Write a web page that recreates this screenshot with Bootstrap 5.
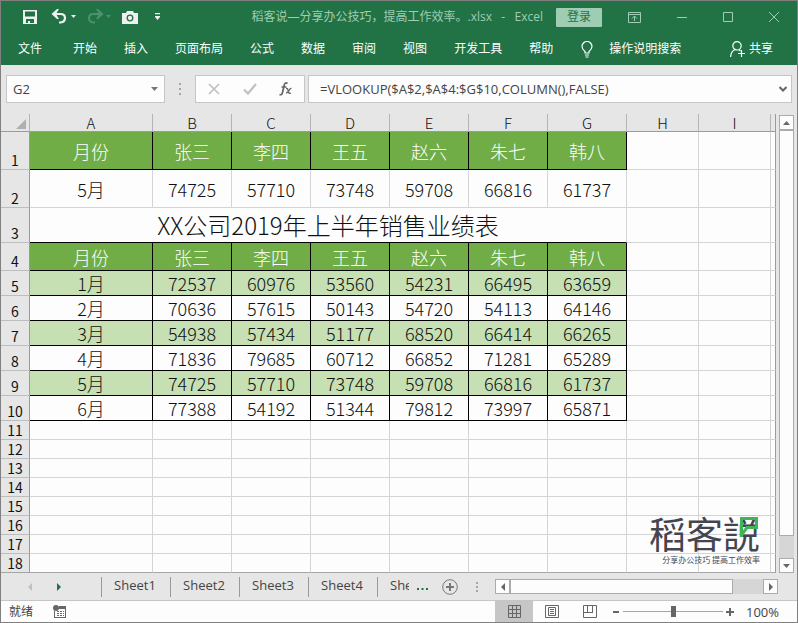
<!DOCTYPE html>
<html lang="zh-CN">
<head>
<meta charset="utf-8">
<meta name="viewport" content="width=device-width, initial-scale=1">
<title>稻客说—分享办公技巧，提高工作效率。.xlsx - Excel</title>
<link href="https://cdn.jsdelivr.net/npm/bootstrap@5.3.0/dist/css/bootstrap.min.css" rel="stylesheet">
<style>
:root{--green:#217346;--mint:#9fcdb3;--chrome:#e6e6e6;--line:#d4d4d4;--edge:#9b9b9b}
body{font-family:"Open Sans","Noto Sans CJK SC",sans-serif;font-size:12px;line-height:16px;color:#444;background:#fdfdfd}
button,input{font:inherit;color:inherit}
button{background:none;border:0;padding:0;line-height:0}
svg{display:block;flex:none}
.app-window{border:1px solid #808080;min-height:100vh}
.ribbon{background:var(--green);color:#fff}
.title-row{height:32px;padding:0 18px 0 22px;color:var(--mint)}
.quick{gap:5px;color:#f0f0f0}
.quick .dim{color:#4f9070}
.camera{margin-left:6px}
.doc-title{white-space:pre}
.login{background:var(--mint);color:var(--green);width:46px;height:19px;border-radius:1px;line-height:18px;margin:0 26px 0 13px}
.win-ctl{gap:36px}
.tab-row{height:32px;padding:0 24px 0 17px}
.ribbon-tabs{gap:27px}
.ribbon-tabs a,.tab-row button{color:#fff;text-decoration:none;line-height:16px}
.ribbon-tabs li:first-child{margin-right:4px}
.formula-row{background:var(--chrome);padding:10px 5px 11px}
.field-box{background:#fdfdfd;border:1px solid #c6c6c6;height:28px}
.field-box input{border:0;outline:0;background:none;min-width:0;padding:0;font-size:13px;line-height:18px}
.name-box{width:159px;padding:0 6px}
.fx-box{width:110px;padding:0 11px 0 12px}
.formula-box{margin-left:3px;padding:0 4px 0 11px}
.grip{width:30px}
.sheet-area{background:var(--chrome)}
.sheet-grid{table-layout:fixed;width:100%;border-collapse:separate;border-spacing:0;font-family:"Noto Sans CJK SC",sans-serif;color:#111;background:#fdfdfd}
.sheet-grid th,.sheet-grid td{padding:0;border:0 solid var(--line);border-width:0 1px 1px 0;text-align:center;vertical-align:middle;font-weight:300;font-size:18px;line-height:18px;white-space:nowrap}
.sheet-grid thead th{height:18px;line-height:17px;font-size:15px;background:var(--chrome);border-right-color:#b4b4b4;border-bottom-color:var(--edge)}
.sheet-grid tbody th{background:var(--chrome);vertical-align:bottom;font-size:14px;line-height:17px;border-right-color:var(--edge);border-bottom-color:#bdbdbd;font-weight:400}
.sheet-grid tr>:last-child{border-right-color:var(--edge)}
.sheet-grid tbody tr:last-child>*{border-bottom-color:#a6a6a6}
.c-num{width:29px}.c-month{width:123px}.c-name{width:79px}.c-free{width:72px}
.r-tall{height:38px}.r-title{height:35px}.r-head{height:28px}.r-data{height:25px}.r-free{height:19px}
.sheet-grid .boxed{border-color:#000}
.sheet-grid .hd{background:#70ad47;color:#fff}
.sheet-grid .band{background:#c6e0b4}
.sheet-grid .big-title{font-size:24px;line-height:24px;border-bottom-color:#000}
.corner{width:0;border:solid transparent;border-width:0 0 10px 10px;border-bottom-color:#b0b0b0;margin:2px 3px 0 auto}
.wordmark{right:16px;bottom:9px;color:#45454f;pointer-events:none}
.wordmark-name{font:400 37px/44px "Noto Sans CJK SC",sans-serif}
.wordmark-sub{font:400 8px/9px "Noto Sans CJK SC",sans-serif;text-align:right}
.wordmark svg{right:2px;top:6px}
.v-scroll{width:21px;padding:1px 3px 0}
.scroll-btn,.scroll-thumb{background:#fdfdfd;border:1px solid #ababab}
.scroll-btn{width:15px;height:15px;flex:none;display:flex;align-items:center;justify-content:center;color:#666}
.v-scroll .scroll-track{background:#d6d6d6;padding-bottom:22px;width:15px}
.sheets-row{background:var(--chrome);height:28px;border-bottom:1px solid #c6c6c6;font-size:13px}
.sheet-nav{width:100px;padding-left:27px;gap:25px}
.sheet-tab{width:69px;height:20px;line-height:16px;padding-right:2px;padding-bottom:4px;border-left:1px solid #999}
.sheet-tab.cut{width:32px;padding:0 0 4px 12px;overflow:hidden}
.new-sheet{margin-left:14px}
.h-scroll{width:283px;margin-right:19px}
.h-scroll .scroll-track{background:#d6d6d6;padding-right:30px}
.h-scroll .scroll-thumb{height:15px}
.status-row{height:21px;padding:0 18px 0 8px}
.view-btn{width:38px;height:21px;display:flex;align-items:center;justify-content:center;color:#666}
.view-btn.on{background:#c6c6c6}
.zoom-range{appearance:none;width:100px;height:15px;margin:0 3px 0 4px;background:linear-gradient(#a6a6a6,#a6a6a6) center/100% 1px no-repeat}
.zoom-range::-webkit-slider-thumb{appearance:none;width:5px;height:11px;background:#666}
.zoom-text{font-size:13px;width:33px;margin-left:12px}
</style>
<script src="https://cdn.jsdelivr.net/npm/bootstrap@5.3.0/dist/js/bootstrap.bundle.min.js"></script>
</head>
<body>
<div class="app-window d-flex flex-column">
  <header class="ribbon">
    <div class="title-row d-flex align-items-center">
      <div class="quick d-flex align-items-center">
        <button aria-label="保存"><svg width="14" height="14" fill="currentColor"><path fill-rule="evenodd" d="M0 0h14v14H0zM2 1.500v5h10v-5zM3 9v4h2v-2h2v2h4V9z"/></svg></button>
        <button aria-label="撤消"><svg width="34" height="16"><path d="M11 5h7.500q4.500 0 4.500 4t-4.500 4.500H17" fill="none" stroke="currentColor" stroke-width="2.200"/><path d="M9.500 5l5.500-5h2l-3 5 3 5h-2z" fill="currentColor"/><path d="M29 6h5l-2.500 3z" fill="currentColor"/></svg></button>
        <button class="dim" aria-label="恢复"><svg width="30" height="16"><path d="M20 5h-7.500Q8 5 8 9t4.500 4.500H14" fill="none" stroke="currentColor" stroke-width="2"/><path d="M22.500 5L17 0h-2l3 5-3 5h2z" fill="currentColor"/><path d="M25 6h5l-2.500 3z" fill="currentColor"/></svg></button>
        <button class="camera" aria-label="照相机"><svg width="16" height="13" fill="none"><path d="M0 2h4l1-2h6l1 2h4v11H0z" fill="currentColor"/><circle cx="8" cy="7" r="2.800" stroke="#217346" stroke-width="1.300"/></svg></button>
        <button class="ms-2" aria-label="自定义快速访问工具栏"><svg width="12" height="8"><path d="M4 0h5v1.300H4zM4 3h5v1L6.500 7 4 4z" fill="currentColor"/></svg></button>
      </div>
      <div class="doc-title ms-auto">稻客说—分享办公技巧，提高工作效率。.xlsx   -   Excel</div>
      <button class="login">登录</button>
      <div class="win-ctl d-flex align-items-center">
        <button aria-label="功能区显示选项"><svg width="13" height="11" fill="none" stroke="currentColor"><path d="M.5.5h12v10H.5zM.5 2.500h12M6.500 9V4M4 6.500L6.500 4 9 6.500"/></svg></button>
        <button aria-label="最小化"><svg width="10" height="11" stroke="currentColor"><path d="M0 5.500h10"/></svg></button>
        <button aria-label="最大化"><svg width="10" height="10" fill="none" stroke="currentColor"><path d="M.5.5h9v9h-9z"/></svg></button>
        <button aria-label="关闭"><svg width="10" height="10" stroke="currentColor"><path d="M0 0l10 10M10 0L0 10"/></svg></button>
      </div>
    </div>
    <nav class="tab-row d-flex align-items-center">
      <ul class="ribbon-tabs list-unstyled d-flex m-0">
        <li><a href="#">文件</a></li><li><a href="#">开始</a></li><li><a href="#">插入</a></li><li><a href="#">页面布局</a></li><li><a href="#">公式</a></li><li><a href="#">数据</a></li><li><a href="#">审阅</a></li><li><a href="#">视图</a></li><li><a href="#">开发工具</a></li><li><a href="#">帮助</a></li>
      </ul>
      <button class="d-flex align-items-center ms-4"><svg class="ms-1 me-3" width="12" height="17" fill="none" stroke="currentColor"><path d="M4 12v-1.500Q1 8 1 5.500a5 5 0 0 1 10 0Q11 8 8 10.500V12zM4 14h4M4.500 16h3" stroke-width="1.200"/></svg>操作说明搜索</button>
      <button class="d-flex align-items-center ms-auto"><svg class="me-1" width="15" height="16" fill="none" stroke="currentColor" stroke-width="1.200"><circle cx="7" cy="4.800" r="4.200"/><path d="M.6 16q.4-6 4.400-7.200M9 9l1.500 1M11.500 9v7M8 12.500h7"/></svg>共享</button>
    </nav>
  </header>

  <div class="formula-row d-flex align-items-center">
    <div class="name-box field-box d-flex align-items-center">
      <input class="flex-grow-1" aria-label="名称框" value="G2">
      <button aria-label="展开名称框"><svg width="7" height="4"><path d="M0 0h7L3.500 4z" fill="#777"/></svg></button>
    </div>
    <div class="grip"><svg class="mx-auto" width="2" height="12" fill="#a6a6a6"><path d="M0 0h2v2H0zM0 5h2v2H0zM0 10h2v2H0z"/></svg></div>
    <div class="fx-box field-box d-flex align-items-center justify-content-between">
      <button aria-label="取消"><svg width="12" height="12" stroke="#c0c0c0" stroke-width="1.700"><path d="M1 1l10 10M11 1L1 11"/></svg></button>
      <button aria-label="输入"><svg width="14" height="12" fill="none" stroke="#c0c0c0" stroke-width="2.200"><path d="M1 6.500l4 4L13 1"/></svg></button>
      <button aria-label="插入函数"><svg width="14" height="14" fill="none" stroke="#666"><path d="M8.500 1.500Q6-.5 5 4L3.500 10.500Q2.800 13.500.5 12.500M2.500 5h5" stroke-width="1.700"/><path d="M7 6.500q1.500-.5 2 1.500l.8 2.500q.5 1.500 2 .5M12.500 6.500q-1-.5-2.500 2T7 11" stroke-width="1.400"/></svg></button>
    </div>
    <div class="formula-box field-box d-flex align-items-center flex-grow-1">
      <input class="flex-grow-1" aria-label="编辑栏" value="=VLOOKUP($A$2,$A$4:$G$10,COLUMN(),FALSE)">
      <button aria-label="展开编辑栏"><svg width="8" height="6" fill="none" stroke="#666" stroke-width="2"><path d="M.5 1L4 4.500 7.500 1"/></svg></button>
    </div>
  </div>

  <main class="sheet-area d-flex flex-grow-1">
    <div class="position-relative flex-grow-1">
      <table class="sheet-grid">
        <colgroup><col class="c-num"><col class="c-month"><col class="c-name" span="6"><col class="c-free" span="2"><col></colgroup>
        <thead><tr><th><div class="corner"></div></th><th>A</th><th>B</th><th>C</th><th>D</th><th>E</th><th>F</th><th>G</th><th>H</th><th>I</th><th></th></tr></thead>
        <tbody id="rows"></tbody>
      </table>
      <div class="wordmark position-absolute">
        <div class="wordmark-name">稻客説</div>
        <svg class="position-absolute" width="18" height="22" fill="none" stroke="#3fb558" stroke-width="3"><path d="M1.500 20V1.500h15v9H7L1.500 18"/></svg>
        <div class="wordmark-sub">分享办公技巧 提高工作效率</div>
      </div>
    </div>
    <div class="v-scroll d-flex flex-column">
      <button class="scroll-btn" aria-label="向上滚动"><svg width="7" height="4"><path d="M0 4h7L3.500 0z" fill="currentColor"/></svg></button>
      <div class="scroll-track flex-grow-1 d-flex"><div class="scroll-thumb flex-grow-1"></div></div>
      <button class="scroll-btn" aria-label="向下滚动"><svg width="7" height="4"><path d="M0 0h7L3.500 4z" fill="currentColor"/></svg></button>
    </div>
  </main>

  <div class="sheets-row d-flex align-items-center">
    <div class="sheet-nav d-flex">
      <button aria-label="上一张工作表"><svg width="4" height="8"><path d="M4 0v8L0 4z" fill="#c0c0c0"/></svg></button>
      <button aria-label="下一张工作表"><svg width="4" height="8"><path d="M0 0v8l4-4z" fill="#217346"/></svg></button>
    </div>
    <button class="sheet-tab">Sheet1</button><button class="sheet-tab">Sheet2</button><button class="sheet-tab">Sheet3</button><button class="sheet-tab">Sheet4</button><button class="sheet-tab cut text-start">She</button>
    <button class="ms-2" aria-label="更多工作表"><svg width="11" height="8" fill="#217346"><path d="M0 5h2v2H0zM4.500 5h2v2h-2zM9 5h2v2H9z"/></svg></button>
    <button class="new-sheet" aria-label="新工作表"><svg width="16" height="16" fill="none" stroke="#777"><circle cx="8" cy="8" r="7.300"/><path d="M4 8h8M8 4v8" stroke-width="2"/></svg></button>
    <svg class="mx-auto" width="2" height="10" fill="#a6a6a6"><path d="M0 0h2v2H0zM0 4h2v2H0zM0 8h2v2H0z"/></svg>
    <div class="h-scroll d-flex">
      <button class="scroll-btn" aria-label="向左滚动"><svg width="4" height="8"><path d="M4 0v8L0 4z" fill="currentColor"/></svg></button>
      <div class="scroll-track flex-grow-1"><div class="scroll-thumb"></div></div>
      <button class="scroll-btn" aria-label="向右滚动"><svg width="4" height="8"><path d="M0 0v8l4-4z" fill="currentColor"/></svg></button>
    </div>
  </div>

  <footer class="status-row d-flex align-items-center">
    <span>就绪</span>
    <button class="ms-3" aria-label="录制宏"><svg class="ms-1" width="13" height="13" fill="#666"><path fill-rule="evenodd" d="M6 1h7v12H1V6h1v6h10V4H6z"/><circle cx="3" cy="3" r="3"/><path d="M4 6h2v1H4zM7 6h2v1H7zM10 6h1v1h-1zM4 8h2v1H4zM7 8h2v1H7zM10 8h1v1h-1zM4 10h2v1H4zM7 10h2v1H7zM10 10h1v1h-1z"/></svg></button>
    <button class="view-btn on ms-auto" aria-label="普通"><svg width="13" height="13" fill="none" stroke="currentColor"><path d="M.5.5h12v12H.5zM4.500 0v13M8.500 0v13M0 4.500h13M0 8.500h13"/></svg></button>
    <button class="view-btn" aria-label="页面布局"><svg width="14" height="13" fill="none" stroke="currentColor"><path d="M.5.5h13v12H.5zM3.500 2.500h7v8h-7zM5 4.500h4M5 6.500h4M5 8.500h4"/></svg></button>
    <button class="view-btn" aria-label="分页预览"><svg width="14" height="13" fill="none" stroke="currentColor"><path d="M.5.5h13v12H.5zM4.500 0v7.500M9.500 0v7.500M0 7.500h10"/></svg></button>
    <button class="ms-1" aria-label="缩小"><svg width="6" height="8"><path d="M0 4h6" stroke="#666" stroke-width="2"/></svg></button>
    <input class="zoom-range" type="range" min="0" max="100" value="50" aria-label="缩放">
    <button aria-label="放大"><svg width="8" height="8"><path d="M0 4h8M4 0v8" stroke="#666" stroke-width="2"/></svg></button>
    <span class="zoom-text">100%</span>
  </footer>
</div>
<script>
const names = ['月份','张三','李四','王五','赵六','朱七','韩八'];
const months = [
  ['1月',72537,60976,53560,54231,66495,63659],
  ['2月',70636,57615,50143,54720,54113,64146],
  ['3月',54938,57434,51177,68520,66414,66265],
  ['4月',71836,79685,60712,66852,71281,65289],
  ['5月',74725,57710,73748,59708,66816,61737],
  ['6月',77388,54192,51344,79812,73997,65871]
];
const cells = (list, cls) => list.map(v => `<td class="${cls}">${v}</td>`).join('');
const blanks = n => '<td></td>'.repeat(n);
const rows = [
  ['r-tall', cells(names, 'boxed hd') + blanks(3)],
  ['r-tall', cells(months[4], '') + blanks(3)],
  ['r-title', '<td colspan="7" class="big-title">XX公司2019年上半年销售业绩表</td>' + blanks(3)],
  ['r-head', cells(names, 'boxed hd') + blanks(3)],
  ...months.map((m, i) => ['r-data', cells(m, i % 2 ? 'boxed' : 'boxed band') + blanks(3)]),
  ...Array.from({length: 8}, () => ['r-free', blanks(10)])
];
document.getElementById('rows').innerHTML =
  rows.map(([cls, html], i) => `<tr class="${cls}"><th scope="row">${i + 1}</th>${html}</tr>`).join('');
</script>
</body>
</html>
